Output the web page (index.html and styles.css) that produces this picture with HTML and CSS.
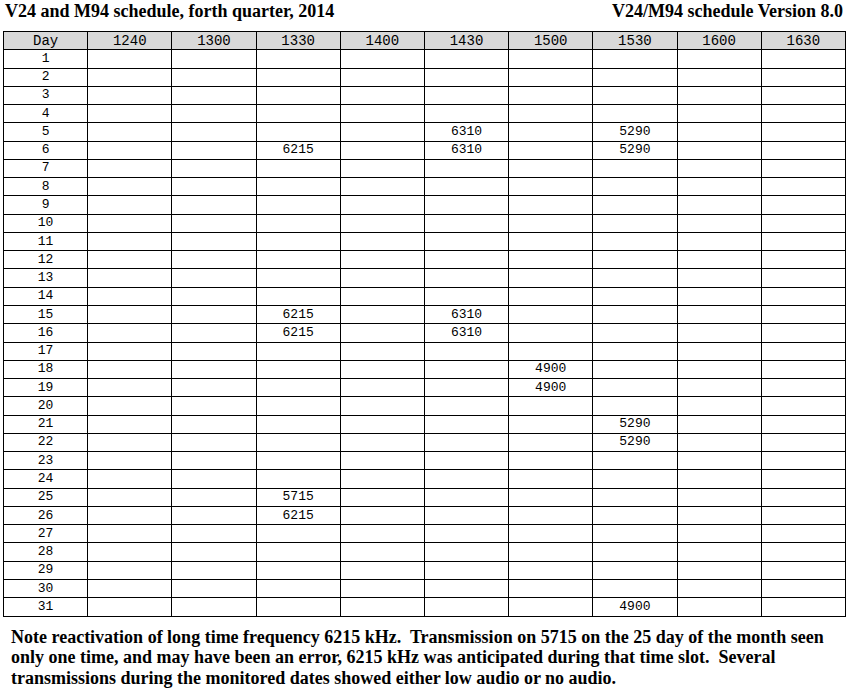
FILE: index.html
```html
<!DOCTYPE html>
<html lang="en">
<head>
<meta charset="utf-8">
<title>V24 and M94 schedule</title>
<link rel="stylesheet" href="styles.css">
</head>
<body>
<div class="page">
  <header class="titles">
    <h1 class="title">V24 and M94 schedule, forth quarter, 2014</h1>
    <h2 class="version">V24/M94 schedule Version 8.0</h2>
  </header>
  <table class="sched">
    <thead>
      <tr><th>Day</th><th>1240</th><th>1300</th><th>1330</th><th>1400</th><th>1430</th><th>1500</th><th>1530</th><th>1600</th><th>1630</th></tr>
    </thead>
    <tbody>
      <tr><td>1</td><td></td><td></td><td></td><td></td><td></td><td></td><td></td><td></td><td></td></tr>
      <tr><td>2</td><td></td><td></td><td></td><td></td><td></td><td></td><td></td><td></td><td></td></tr>
      <tr><td>3</td><td></td><td></td><td></td><td></td><td></td><td></td><td></td><td></td><td></td></tr>
      <tr><td>4</td><td></td><td></td><td></td><td></td><td></td><td></td><td></td><td></td><td></td></tr>
      <tr><td>5</td><td></td><td></td><td></td><td></td><td>6310</td><td></td><td>5290</td><td></td><td></td></tr>
      <tr><td>6</td><td></td><td></td><td>6215</td><td></td><td>6310</td><td></td><td>5290</td><td></td><td></td></tr>
      <tr><td>7</td><td></td><td></td><td></td><td></td><td></td><td></td><td></td><td></td><td></td></tr>
      <tr><td>8</td><td></td><td></td><td></td><td></td><td></td><td></td><td></td><td></td><td></td></tr>
      <tr><td>9</td><td></td><td></td><td></td><td></td><td></td><td></td><td></td><td></td><td></td></tr>
      <tr><td>10</td><td></td><td></td><td></td><td></td><td></td><td></td><td></td><td></td><td></td></tr>
      <tr><td>11</td><td></td><td></td><td></td><td></td><td></td><td></td><td></td><td></td><td></td></tr>
      <tr><td>12</td><td></td><td></td><td></td><td></td><td></td><td></td><td></td><td></td><td></td></tr>
      <tr><td>13</td><td></td><td></td><td></td><td></td><td></td><td></td><td></td><td></td><td></td></tr>
      <tr><td>14</td><td></td><td></td><td></td><td></td><td></td><td></td><td></td><td></td><td></td></tr>
      <tr><td>15</td><td></td><td></td><td>6215</td><td></td><td>6310</td><td></td><td></td><td></td><td></td></tr>
      <tr><td>16</td><td></td><td></td><td>6215</td><td></td><td>6310</td><td></td><td></td><td></td><td></td></tr>
      <tr><td>17</td><td></td><td></td><td></td><td></td><td></td><td></td><td></td><td></td><td></td></tr>
      <tr><td>18</td><td></td><td></td><td></td><td></td><td></td><td>4900</td><td></td><td></td><td></td></tr>
      <tr><td>19</td><td></td><td></td><td></td><td></td><td></td><td>4900</td><td></td><td></td><td></td></tr>
      <tr><td>20</td><td></td><td></td><td></td><td></td><td></td><td></td><td></td><td></td><td></td></tr>
      <tr><td>21</td><td></td><td></td><td></td><td></td><td></td><td></td><td>5290</td><td></td><td></td></tr>
      <tr><td>22</td><td></td><td></td><td></td><td></td><td></td><td></td><td>5290</td><td></td><td></td></tr>
      <tr><td>23</td><td></td><td></td><td></td><td></td><td></td><td></td><td></td><td></td><td></td></tr>
      <tr><td>24</td><td></td><td></td><td></td><td></td><td></td><td></td><td></td><td></td><td></td></tr>
      <tr><td>25</td><td></td><td></td><td>5715</td><td></td><td></td><td></td><td></td><td></td><td></td></tr>
      <tr><td>26</td><td></td><td></td><td>6215</td><td></td><td></td><td></td><td></td><td></td><td></td></tr>
      <tr><td>27</td><td></td><td></td><td></td><td></td><td></td><td></td><td></td><td></td><td></td></tr>
      <tr><td>28</td><td></td><td></td><td></td><td></td><td></td><td></td><td></td><td></td><td></td></tr>
      <tr><td>29</td><td></td><td></td><td></td><td></td><td></td><td></td><td></td><td></td><td></td></tr>
      <tr><td>30</td><td></td><td></td><td></td><td></td><td></td><td></td><td></td><td></td><td></td></tr>
      <tr><td>31</td><td></td><td></td><td></td><td></td><td></td><td></td><td>4900</td><td></td><td></td></tr>
    </tbody>
  </table>
  <p class="note">Note reactivation of long time frequency 6215 kHz.&nbsp; Transmission on 5715 on the 25 day of the month seen<br>only one time, and may have been an error, 6215 kHz was anticipated during that time slot.&nbsp; Several<br>transmissions during the monitored dates showed either low audio or no audio.</p>
</div>
</body>
</html>
```

FILE: styles.css
```css
html, body {
  margin: 0;
  padding: 0;
  background: #ffffff;
}

.page {
  width: 850px;
  color: #000000;
}

.titles {
  display: flex;
  justify-content: space-between;
  align-items: flex-start;
  height: 31px;
  padding: 0 7px 0 5px;
  box-sizing: border-box;
}

.title,
.version {
  margin: 0;
  padding-top: 1px;
  font-family: "Liberation Serif", "Times New Roman", serif;
  font-weight: bold;
  font-size: 18px;
  line-height: 20px;
}

.sched {
  margin-left: 3px;
  width: 843px;
  border-collapse: collapse;
  table-layout: fixed;
  font-family: "Liberation Mono", "Courier New", monospace;
  font-size: 13px;
}

.sched th,
.sched td {
  border: 1px solid #000000;
  padding: 0;
  height: 17.28px;
  text-align: center;
  vertical-align: middle;
  line-height: 14px;
  font-weight: normal;
}

.sched th {
  background: #d9d9d9;
  font-size: 14px;
}

.note {
  margin: 10px 0 0 11px;
  font-family: "Liberation Serif", "Times New Roman", serif;
  font-weight: bold;
  font-size: 18px;
  line-height: 20.5px;
}
```
